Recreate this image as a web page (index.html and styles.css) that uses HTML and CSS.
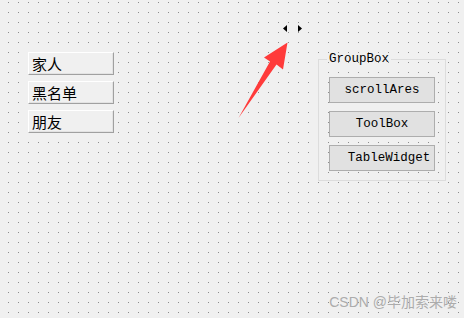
FILE: index.html
```html
<!DOCTYPE html>
<html lang="zh">
<head>
    <meta charset="UTF-8">
    <meta name="viewport" content="width=device-width, initial-scale=1.0">
    <title>Form Designer</title>
    <link rel="stylesheet" href="styles.css">
</head>
<body>
    <div class="form">
        <div class="btn-list">
            <button class="left-btn">家人</button>
            <button class="left-btn">黑名单</button>
            <button class="left-btn">朋友</button>
        </div>

        <fieldset class="groupbox">
            <legend>GroupBox</legend>
            <button class="tool-btn">scrollAres</button>
            <button class="tool-btn">ToolBox</button>
            <button class="tool-btn tool-btn-wide">TableWidget</button>
        </fieldset>

        <!-- splitter handles -->
        <svg class="handles" width="22" height="10" viewBox="281 24 22 10">
            <polygon points="283,28.5 287,25 287,32" fill="#000"/>
            <polygon points="298,25 298,32 302,28.5" fill="#000"/>
        </svg>

        <!-- annotation arrow -->
        <svg class="arrow" width="56" height="80" viewBox="236 40 56 80">
            <polygon points="238.5,118 276.5,64.5 283,69.5 287.5,42.5 264,57.5 270,61.5" fill="#ff3b3b"/>
        </svg>

        <div class="watermark">CSDN @毕加索来喽</div>
    </div>
</body>
</html>
```

FILE: styles.css
```css
html, body {
    margin: 0;
    height: 100%;
    overflow: hidden;
}
body {
    background-color: #f0f0f0;
    background-image: conic-gradient(at 1px 1px, transparent 270deg, #8c8c8c 0);
    background-size: 10px 10px;
    background-position: 8px 2px;
}
.form {
    position: relative;
    display: flex;
    align-items: flex-start;
    height: 318px;
    padding-left: 28px;
    box-sizing: border-box;
}
.btn-list {
    display: flex;
    flex-direction: column;
    gap: 6px;
    margin-top: 52px;
}
.left-btn {
    width: 86px;
    height: 23px;
    box-sizing: border-box;
    padding: 0 0 0 3px;
    background: #f0f0f0;
    border: 1px solid;
    border-color: #ffffff #a0a0a0 #a0a0a0 #ffffff;
    box-shadow: inset -1px -1px 0 #e3e3e3;
    font-family: "Noto Sans CJK SC", sans-serif;
    font-size: 15px;
    line-height: 19px;
    color: #000;
    text-align: left;
}
.groupbox {
    width: 128px;
    box-sizing: border-box;
    margin: 51px 0 0 204px;
    padding: 10px 10px 9px 10px;
    border: 1px solid #dcdcdc;
    display: flex;
    flex-direction: column;
    gap: 8px;
}
.groupbox legend {
    margin-left: -2px;
    padding: 0 2px 0 2px;
    font-family: "Liberation Mono", monospace;
    font-size: 12.5px;
    line-height: 16px;
    color: #000;
}
.tool-btn {
    width: 106px;
    height: 26px;
    box-sizing: border-box;
    padding: 0;
    background: #e1e1e1;
    border: 1px solid #adadad;
    font-family: "Liberation Mono", monospace;
    font-size: 12.5px;
    color: #000;
    text-align: center;
}
.tool-btn-wide {
    padding-left: 14px;
    white-space: nowrap;
    overflow: hidden;
}
.handles {
    position: absolute;
    left: 281px;
    top: 24px;
}
.arrow {
    position: absolute;
    left: 236px;
    top: 40px;
}
.watermark {
    position: absolute;
    right: 7px;
    bottom: 8px;
    font-family: "Liberation Sans", "Noto Sans CJK SC", sans-serif;
    font-size: 14px;
    line-height: 16px;
    color: #acacac;
}
```
